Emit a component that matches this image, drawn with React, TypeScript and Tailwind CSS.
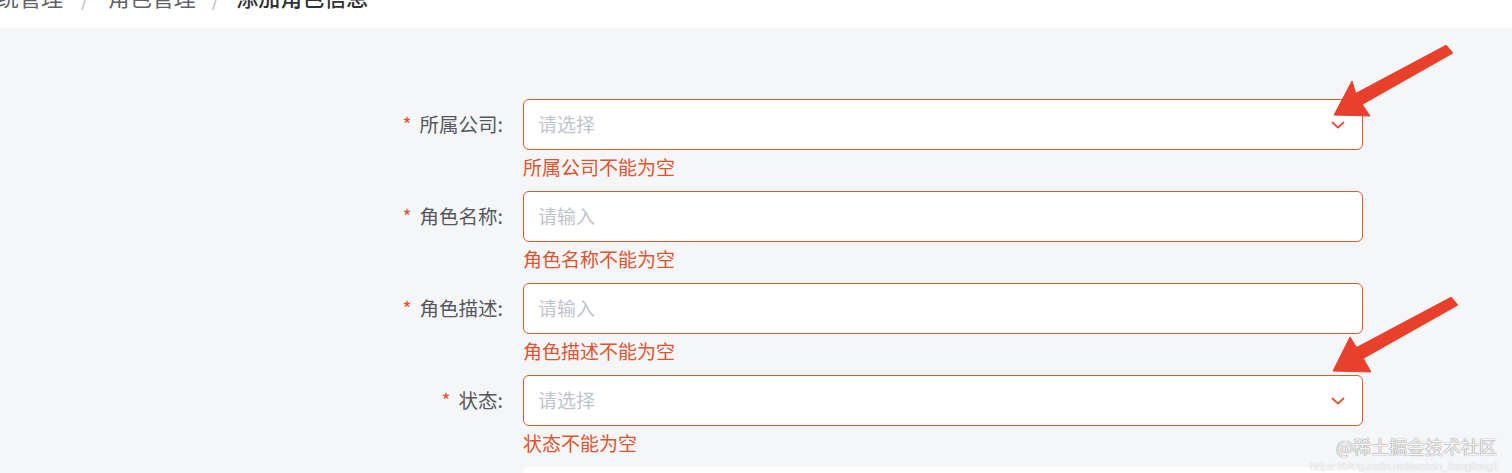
import React from 'react';

const FONT = '"Noto Sans CJK SC", "Noto Sans", "Liberation Sans", sans-serif';

interface FieldProps {
  label: string;
  placeholder: string;
  error: string;
  select?: boolean;
}

const Chevron: React.FC = () => (
  <svg width="16" height="16" viewBox="0 0 16 16" fill="none">
    <path d="M2.5 5.5 L8 10.5 L13.5 5.5" stroke="#e0532f" strokeWidth="1.8" strokeLinecap="round" strokeLinejoin="round" />
  </svg>
);

const Field: React.FC<FieldProps> = ({ label, placeholder, error, select }) => (
  <div className="flex h-[92px]">
    <div className="w-[150px] h-[50px] flex items-center justify-end pr-[20px] text-[19.5px] text-[#55585e]">
      <span className="text-[#e0532f] mr-[8px]">*</span>
      {label}:
    </div>
    <div className="w-[840px]">
      <div className="h-[51px] rounded-[6px] border-[1.5px] border-[#e4572f] bg-white flex items-center pl-[14px] pr-[16px]">
        <span className="flex-1 text-[19px] text-[#c0c4cc]">{placeholder}</span>
        {select && <Chevron />}
      </div>
      <div className="mt-[4px] text-[19px] leading-[26px] text-[#e0532f]">{error}</div>
    </div>
  </div>
);

const Arrows: React.FC = () => (
  <svg className="absolute left-0 top-0 pointer-events-none" width="1512" height="473" viewBox="0 0 1512 473">
    <g fill="#e8402a" stroke="#e8402a" strokeLinejoin="round">
      <path d="M1446 46 L1452 53 L1362 104 L1356 94 Z" strokeWidth="2" />
      <path d="M1352 81 L1334 115 L1370 116 L1362 104 L1356 94 Z" strokeWidth="1" />
      <path d="M1451 298 L1457 305 L1363 358 L1357 348 Z" strokeWidth="2" />
      <path d="M1350 337 L1333 371 L1371 372 L1363 358 L1357 348 Z" strokeWidth="1" />
    </g>
  </svg>
);

export default function App() {
  return (
    <div className="relative w-[1512px] h-[473px] overflow-hidden bg-[#f5f6f8]" style={{ fontFamily: FONT }}>
      <div className="h-[28px] bg-white overflow-hidden">
        <div className="flex items-center -mt-[19px] -ml-[25px] text-[22px] leading-[30px] whitespace-nowrap">
          <span className="text-[#606266]">系统管理</span>
          <span className="mx-[18px] text-[#c0c4cc]">/</span>
          <span className="text-[#606266]">角色管理</span>
          <span className="mx-[16px] text-[#c0c4cc]">/</span>
          <span className="text-[#303133] font-medium">添加角色信息</span>
        </div>
      </div>

      <div className="pt-[71px] pl-[373px]">
        <Field label="所属公司" placeholder="请选择" error="所属公司不能为空" select />
        <Field label="角色名称" placeholder="请输入" error="角色名称不能为空" />
        <Field label="角色描述" placeholder="请输入" error="角色描述不能为空" />
        <Field label="状态" placeholder="请选择" error="状态不能为空" select />
        <div className="flex">
          <div className="w-[150px]" />
          <div className="w-[840px] h-[40px] rounded-[6px] bg-white" />
        </div>
      </div>

      <Arrows />

      <div className="absolute left-[1336px] top-[434px] text-[18px] leading-[24px] text-[#f6f6f6] [text-shadow:0_0_1px_#888,0_0_1px_#888]">
        @稀土掘金技术社区
      </div>
      <div className="absolute left-[1310px] top-[459px] text-[11px] leading-[14px] text-[#f2f2f2] [text-shadow:0_0_1px_#ccc]" style={{ fontFamily: '"Liberation Sans", sans-serif' }}>
        https://blog.csdn.net/weixin_liangfeng1
      </div>
    </div>
  );
}
